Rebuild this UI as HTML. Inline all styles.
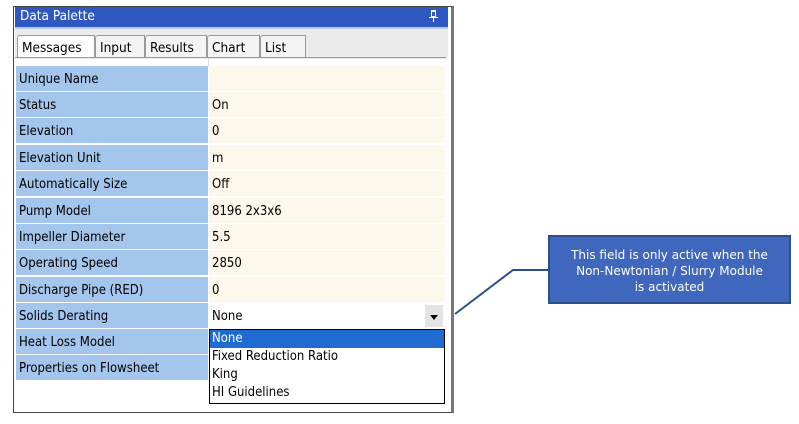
<!DOCTYPE html>
<html><head><style>
body{margin:0;width:799px;height:424px;background:#fff;position:relative;overflow:hidden;font-family:"DejaVu Sans Condensed","Liberation Sans",sans-serif;font-size:13px;color:#000}
.a{position:absolute}
.row{position:absolute;left:16px;width:429px;height:26px}
.l{position:absolute;left:0;top:0;width:192px;height:25px;background:#a4c5ec;line-height:27px;padding-left:3px;box-sizing:border-box}
.v{position:absolute;left:193px;top:0;width:236px;height:25px;background:#fdf8ec;line-height:27px;padding-left:3px;box-sizing:border-box}
.tab{position:absolute;top:35px;height:22px;line-height:24px;font-size:13.5px;padding-left:4px;box-sizing:border-box;background:#f4f4f4;border:1px solid #999;border-bottom:none;border-radius:3px 0 0 0}
</style></head><body>
<div class="a" style="left:13px;top:6px;width:437px;height:405px;border:1px solid #444;border-right:3px solid #777;background:#fff"></div>
<div class="a" style="left:15px;top:7px;width:433px;height:20px;background:#2f57c0;color:#fff;font-size:13.5px;line-height:19px;padding-left:5px;box-sizing:border-box">Data Palette</div>
<div class="a" style="left:431px;top:10px;width:5px;height:7px;border:1px solid #fff;border-top:2px solid #fff;box-sizing:border-box"></div>
<div class="a" style="left:429px;top:17px;width:9px;height:1px;background:#fff"></div>
<div class="a" style="left:433px;top:18px;width:1px;height:4px;background:#fff"></div>
<div class="a" style="left:15px;top:27px;width:433px;height:32px;background:#ececec;border-top:2px solid #b4c8ea;box-sizing:border-box"></div>
<div class="tab" style="left:17px;width:78px;background:#fff">Messages</div>
<div class="tab" style="left:95px;width:50px">Input</div>
<div class="tab" style="left:145px;width:62px">Results</div>
<div class="tab" style="left:207px;width:53px">Chart</div>
<div class="tab" style="left:260px;width:46px">List</div>
<div class="a" style="left:15px;top:57px;width:431px;height:1px;background:#999"></div>
<div class="a" style="left:208px;top:58px;width:1px;height:9px;background:#ddd"></div>

<div class="row" style="top:66px"><div class="l">Unique Name</div><div class="v"></div></div>
<div class="row" style="top:92px"><div class="l">Status</div><div class="v">On</div></div>
<div class="row" style="top:118px"><div class="l">Elevation</div><div class="v">0</div></div>
<div class="row" style="top:145px"><div class="l">Elevation Unit</div><div class="v">m</div></div>
<div class="row" style="top:171px"><div class="l">Automatically Size</div><div class="v">Off</div></div>
<div class="row" style="top:198px"><div class="l">Pump Model</div><div class="v">8196 2x3x6</div></div>
<div class="row" style="top:224px"><div class="l">Impeller Diameter</div><div class="v">5.5</div></div>
<div class="row" style="top:250px"><div class="l">Operating Speed</div><div class="v">2850</div></div>
<div class="row" style="top:277px"><div class="l">Discharge Pipe (RED)</div><div class="v">0</div></div>
<div class="row" style="top:303px"><div class="l">Solids Derating</div><div class="v" style="background:#fff">None</div></div>
<div class="row" style="top:329px"><div class="l">Heat Loss Model</div><div class="v"></div></div>
<div class="row" style="top:355px"><div class="l">Properties on Flowsheet</div><div class="v"></div></div>
<div class="a" style="left:425px;top:305px;width:18px;height:22px;background:#e4e4e4"></div>
<div class="a" style="left:430px;top:315px;width:0;height:0;border-left:4px solid transparent;border-right:4px solid transparent;border-top:5px solid #000"></div>

<div class="a" style="left:209px;top:329px;width:234px;height:73px;background:#fff;border:1px solid #000;line-height:18px;font-size:13px">
<div style="background:#1f6bd2;color:#fff;padding-left:2px">None</div>
<div style="padding-left:2px">Fixed Reduction Ratio</div>
<div style="padding-left:2px">King</div>
<div style="padding-left:2px">HI Guidelines</div>
</div>

<svg class="a" style="left:0;top:0" width="799" height="424"><polyline points="455,314 513,270 549,270" fill="none" stroke="#2c4f8c" stroke-width="2"/></svg>
<div class="a" style="left:548px;top:235px;width:243px;height:69px;background:#3f67be;border:2px solid #2c4f8c;box-sizing:border-box;color:#fff;font-family:'DejaVu Sans','Liberation Sans',sans-serif;font-size:12px;line-height:16px;text-align:center;padding-top:10px">This field is only active when the<br>Non-Newtonian / Slurry Module<br>is activated</div>
</body></html>
